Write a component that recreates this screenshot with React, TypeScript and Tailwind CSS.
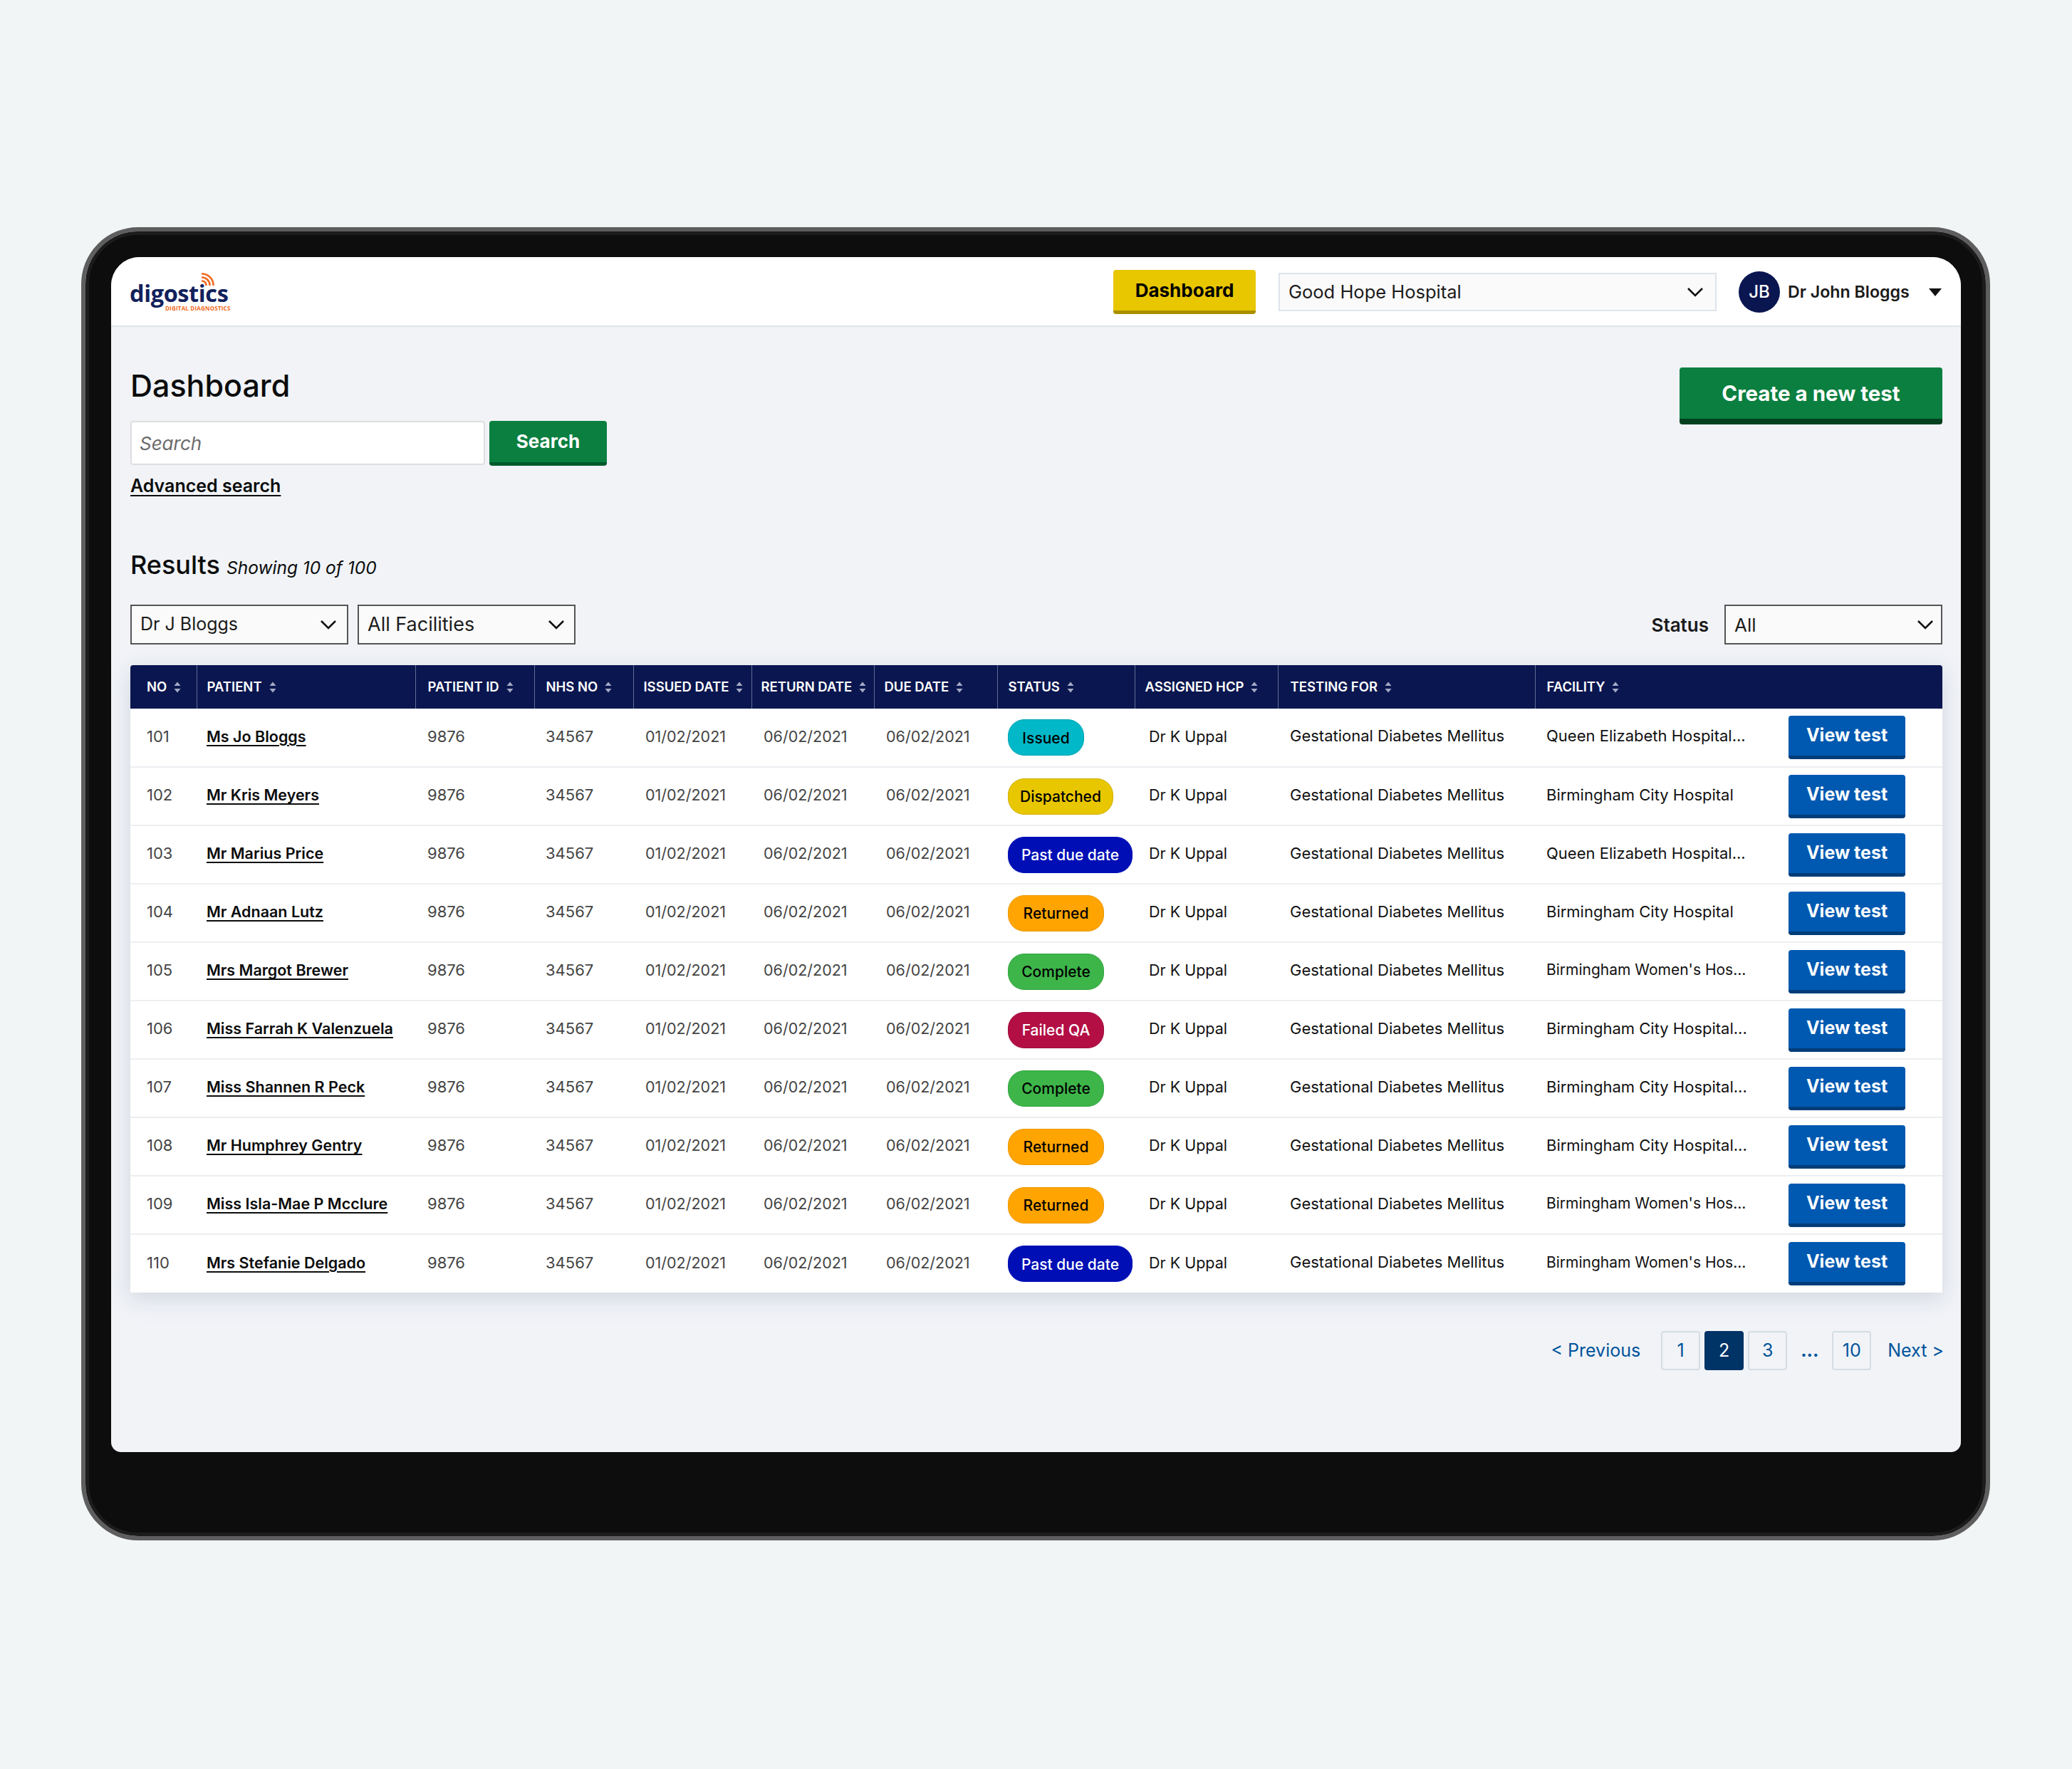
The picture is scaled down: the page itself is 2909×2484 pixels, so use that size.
const font = { fontFamily: '"Inter", "Liberation Sans", sans-serif' };

type Row = {
  no: number;
  patient: string;
  status: string;
  facility: string;
};

const rows: Row[] = [
  { no: 101, patient: 'Ms Jo Bloggs', status: 'Issued', facility: 'Queen Elizabeth Hospital...' },
  { no: 102, patient: 'Mr Kris Meyers', status: 'Dispatched', facility: 'Birmingham City Hospital' },
  { no: 103, patient: 'Mr Marius Price', status: 'Past due date', facility: 'Queen Elizabeth Hospital...' },
  { no: 104, patient: 'Mr Adnaan Lutz', status: 'Returned', facility: 'Birmingham City Hospital' },
  { no: 105, patient: 'Mrs Margot Brewer', status: 'Complete', facility: "Birmingham Women's Hos..." },
  { no: 106, patient: 'Miss Farrah K Valenzuela', status: 'Failed QA', facility: 'Birmingham City Hospital...' },
  { no: 107, patient: 'Miss Shannen R Peck', status: 'Complete', facility: 'Birmingham City Hospital...' },
  { no: 108, patient: 'Mr Humphrey Gentry', status: 'Returned', facility: 'Birmingham City Hospital...' },
  { no: 109, patient: 'Miss Isla-Mae P Mcclure', status: 'Returned', facility: "Birmingham Women's Hos..." },
  { no: 110, patient: 'Mrs Stefanie Delgado', status: 'Past due date', facility: "Birmingham Women's Hos..." },
];

const pillStyles: Record<string, string> = {
  Issued: 'bg-[#00b8c8] border-[#00a5b4] text-black w-[107px]',
  Dispatched: 'bg-[#e8c600] border-[#cfb000] text-black w-[148px]',
  'Past due date': 'bg-[#000fb5] border-[#000fb5] text-white w-[175px]',
  Returned: 'bg-[#ffa400] border-[#ec9800] text-black w-[135px]',
  Complete: 'bg-[#3db549] border-[#35a541] text-black w-[135px]',
  'Failed QA': 'bg-[#b30f45] border-[#a00d3e] text-white w-[135px]',
};

const headers = [
  { label: 'NO', width: 'w-[93px]', pad: 'pl-[23px]' },
  { label: 'PATIENT', width: 'w-[307px]', pad: 'pl-[14px]' },
  { label: 'PATIENT ID', width: 'w-[167px]', pad: 'pl-[17px]' },
  { label: 'NHS NO', width: 'w-[139px]', pad: 'pl-[16px]' },
  { label: 'ISSUED DATE', width: 'w-[166px]', pad: 'pl-[14px]' },
  { label: 'RETURN DATE', width: 'w-[172px]', pad: 'pl-[13px]' },
  { label: 'DUE DATE', width: 'w-[173px]', pad: 'pl-[14px]' },
  { label: 'STATUS', width: 'w-[193px]', pad: 'pl-[15px]' },
  { label: 'ASSIGNED HCP', width: 'w-[201px]', pad: 'pl-[14px]' },
  { label: 'TESTING FOR', width: 'w-[361px]', pad: 'pl-[17px]' },
  { label: 'FACILITY', width: 'w-[356px]', pad: 'pl-[16px]' },
  { label: '', width: 'w-[216px]', pad: '' },
];

function SortIcon() {
  return (
    <svg width="10" height="16" viewBox="0 0 10 16" className="shrink-0">
      <path d="M5 0.5 L9.5 6 H0.5 Z" fill="#a3aac4" />
      <path d="M5 15.5 L9.5 10 H0.5 Z" fill="#a3aac4" />
    </svg>
  );
}

function Chevron() {
  return (
    <svg width="24" height="14" viewBox="0 0 24 14" fill="none" className="shrink-0">
      <path d="M2 2 L12 12 L22 2" stroke="#111" strokeWidth="2.6" />
    </svg>
  );
}

function SelectBox({ label, className }: { label: string; className: string }) {
  return (
    <div className={`flex items-center justify-between bg-[#fafafa] pl-[12px] text-[#1c1c1c] border-2 ${className}`}>
      <span>{label}</span>
      <Chevron />
    </div>
  );
}

function Logo() {
  return (
    <div className="relative w-[140px] h-[56px]">
      <span
        className="absolute left-[-1px] top-[14px] text-[32.5px] leading-[32px] font-bold text-[#12215c] tracking-[-0.4px]"
        style={{ fontFamily: '"Open Sans", sans-serif' }}
      >
        digostics
      </span>
      <span
        className="absolute left-[49px] top-[46px] text-[8px] leading-[10px] font-bold text-[#f26a21] tracking-[0.2px] whitespace-nowrap"
        style={{ fontFamily: '"Open Sans", sans-serif' }}
      >
        DIGITAL DIAGNOSTICS
      </span>
      <svg width="18" height="18" viewBox="0 0 18 18" fill="none" className="absolute left-[100px] top-[1px]">
        <path d="M0 1.5 A16 16 0 0 1 16.5 18" stroke="#f26a21" strokeWidth="2.6" />
        <path d="M0 6.5 A11 11 0 0 1 11.5 18" stroke="#f26a21" strokeWidth="2.6" />
        <path d="M0 11.5 A6 6 0 0 1 6.5 18" stroke="#f26a21" strokeWidth="2.6" />
      </svg>
    </div>
  );
}

function PageButton({ label, active }: { label: string; active?: boolean }) {
  return (
    <div
      className={`flex h-[55px] w-[55px] items-center justify-center rounded-[4px] border-2 text-[25px] ${
        active ? 'border-[#003366] bg-[#003366] text-white' : 'border-[#d5dde3] text-[#00539b]'
      }`}
    >
      {label}
    </div>
  );
}

export default function App() {
  return (
    <div className="min-h-[2484px] bg-[#f1f5f6] pt-[319px] pl-[114px]" style={font}>
      <div className="w-[2680px] h-[1844px] rounded-[80px] border-[6px] border-[#5e5e5e]">
        <div className="h-full rounded-[74px] border-[5px] border-[#1c1c1c] bg-[#0d0d0d] pt-[31px] pl-[31px]">
          <div className="flex h-[1678px] w-[2597px] flex-col rounded-t-[40px] rounded-b-[14px] bg-[#f1f3f7] overflow-hidden">
            {/* top bar */}
            <header className="flex h-[98px] shrink-0 items-center border-b-2 border-[#dfe5ea] bg-white pl-[27px] pt-[2px]">
              <Logo />
              <button className="ml-[1240px] h-[62px] w-[200px] rounded-[4px] border-b-[5px] border-[#a88f00] bg-[#e8c600] text-[26px] font-bold text-black">
                Dashboard
              </button>
              <SelectBox label="Good Hope Hospital" className="ml-[32px] h-[54px] w-[615px] border-[#dfe5ea] pr-[16px] text-[25.5px]" />
              <div className="ml-[31px] flex h-[58px] w-[58px] items-center justify-center rounded-full bg-[#0a1650] text-[24px] font-medium text-white">
                JB
              </div>
              <span className="ml-[11px] text-[23.2px] font-semibold text-[#1a1a1a]">Dr John Bloggs</span>
              <svg width="18" height="11" viewBox="0 0 18 11" className="ml-[27px]">
                <path d="M0 0 H18 L9 11 Z" fill="#111" />
              </svg>
            </header>

            <main className="flex-1 pl-[27px] pr-[26px] pt-[59px]">
              <div className="flex items-start justify-between">
                <div>
                  <h1 className="mt-[-4px] text-[43px] leading-[54px] font-medium text-[#0b0c0c]">Dashboard</h1>
                  <div className="mt-[23px] flex gap-[6px]">
                    <input
                      placeholder="Search"
                      className="h-[62px] w-[498px] rounded-[4px] border-2 border-[#dedede] bg-white px-[11px] text-[26px] italic placeholder:text-[#6b6b6b]"
                    />
                    <button className="h-[63px] w-[165px] rounded-[4px] border-b-[5px] border-[#005a2c] bg-[#0b7f3f] pb-[2px] text-[26px] font-bold text-white">
                      Search
                    </button>
                  </div>
                  <a className="mt-[13px] inline-block text-[25px] leading-[30px] font-semibold text-[#0b0c0c] underline underline-offset-4">
                    Advanced search
                  </a>
                </div>
                <button className="mt-[-2px] h-[80px] w-[369px] rounded-[4px] border-b-[8px] border-[#00401f] bg-[#0b7f3f] text-[29.5px] font-bold text-white">
                  Create a new test
                </button>
              </div>

              <div className="mt-[72px] flex items-baseline gap-[9px]">
                <h2 className="text-[36px] leading-[48px] font-medium text-[#0b0c0c]">Results</h2>
                <span className="text-[24.5px] italic text-[#0b0c0c]">Showing 10 of 100</span>
              </div>

              <div className="mt-[32px] flex items-center gap-[13px]">
                <SelectBox label="Dr J Bloggs" className="h-[56px] w-[306px] border-[#555] pr-[14px] text-[25px]" />
                <SelectBox label="All Facilities" className="h-[56px] w-[306px] border-[#555] pr-[13px] text-[27px]" />
                <span className="ml-auto mr-[9px] text-[26px] font-semibold text-[#1a1a1a]">Status</span>
                <SelectBox label="All" className="h-[56px] w-[306px] border-[#555] pr-[10px] text-[26px]" />
              </div>

              <div className="mt-[29px] rounded-t-[4px] bg-white shadow-[0_8px_30px_rgba(170,180,195,0.45)]">
                <table className="w-full table-fixed border-collapse">
                  <colgroup>
                    {headers.map((h) => (
                      <col key={h.label} className={h.width} />
                    ))}
                  </colgroup>
                  <thead>
                    <tr className="h-[61px] bg-[#0a1650]">
                      {headers.map((h, i) => (
                        <th
                          key={h.label}
                          className={`p-0 text-left first:rounded-tl-[4px] last:rounded-tr-[4px] ${h.pad} ${
                            i < 10 ? 'border-r border-[#626b93]' : ''
                          }`}
                        >
                          {h.label && (
                            <span className="flex items-center gap-[10px] text-[18.5px] font-semibold whitespace-nowrap text-white">
                              {h.label}
                              <SortIcon />
                            </span>
                          )}
                        </th>
                      ))}
                    </tr>
                  </thead>
                  <tbody>
                    {rows.map((r) => (
                      <tr key={r.no} className="h-[82px] border-b-2 border-[#eceef1] text-[22px] whitespace-nowrap last:border-b-0">
                        <td className="pl-[23px] pb-[3px] text-[#444]">{r.no}</td>
                        <td className="pl-[14px] pb-[3px] text-[21.5px] font-semibold text-[#0b0c0c]">
                          <a className="underline underline-offset-4">{r.patient}</a>
                        </td>
                        <td className="pl-[17px] pb-[3px] text-[#444]">9876</td>
                        <td className="pl-[16px] pb-[3px] text-[#444]">34567</td>
                        <td className="pl-[17px] pb-[3px] text-[21.5px] text-[#444]">01/02/2021</td>
                        <td className="pl-[17px] pb-[3px] text-[21.5px] text-[#444]">06/02/2021</td>
                        <td className="pl-[17px] pb-[3px] text-[21.5px] text-[#444]">06/02/2021</td>
                        <td className="pl-[15px]">
                          <span
                            className={`inline-flex h-[51px] items-center justify-center rounded-[23px] border pt-[2px] text-[21px] font-medium align-middle ${pillStyles[r.status]}`}
                          >
                            {r.status}
                          </span>
                        </td>
                        <td className="pl-[20px] pb-[3px] text-[21.5px] text-[#111]">Dr K Uppal</td>
                        <td className="pl-[17px] pb-[4px] text-[#111]">Gestational Diabetes Mellitus</td>
                        <td className={`pl-[16px] pb-[4px] text-[#111] ${r.facility.includes('Women') ? 'text-[21px]' : ''}`}>{r.facility}</td>
                        <td className="pl-[0px]">
                          <button className="h-[61px] w-[164px] rounded-[4px] border-b-[5px] border-[#003d78] bg-[#0059b0] text-[25px] font-bold text-white align-middle">
                            View test
                          </button>
                        </td>
                      </tr>
                    ))}
                  </tbody>
                </table>
              </div>

              <nav className="mt-[54px] mr-[-2px] flex items-center justify-end text-[25px] text-[#00539b]">
                <span>&lt; Previous</span>
                <div className="ml-[29px] flex gap-[6px]">
                  <PageButton label="1" />
                  <PageButton label="2" active />
                  <PageButton label="3" />
                </div>
                <span className="mx-[19px] font-bold">...</span>
                <PageButton label="10" />
                <span className="ml-[23px]">Next &gt;</span>
              </nav>
            </main>
          </div>
        </div>
      </div>
    </div>
  );
}
